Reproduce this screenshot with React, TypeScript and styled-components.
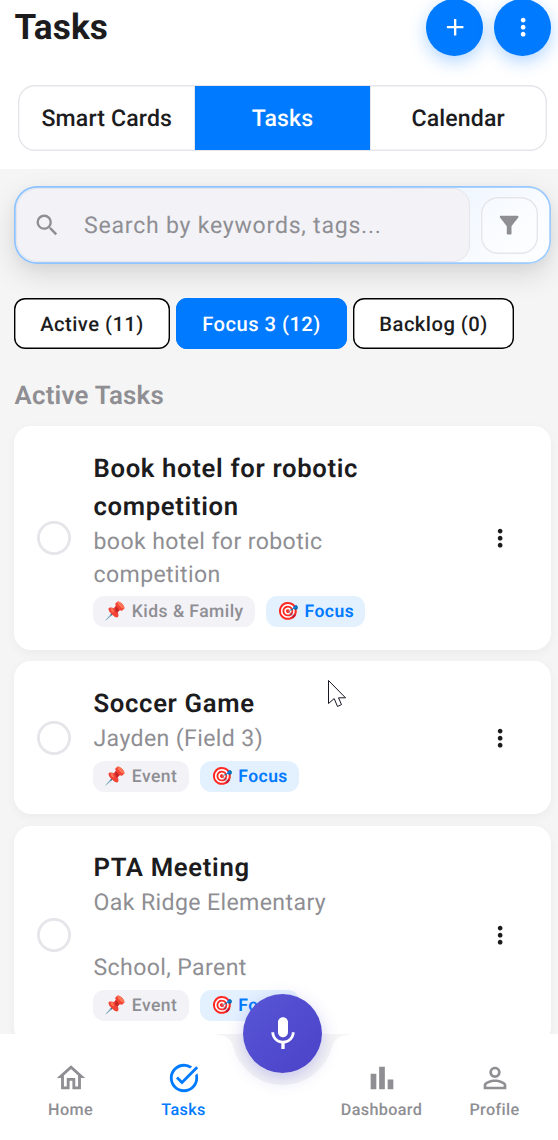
import React from 'react';
import styled, { createGlobalStyle, css } from 'styled-components';
import { MdAdd, MdFilterAlt, MdMic, MdMoreVert, MdOutlineHome, MdPersonOutline, MdSearch, MdTaskAlt } from 'react-icons/md';

const blue = '#007aff';
const ink = '#1c1c1e';
const muted = '#8e8e93';
const line = '#e5e5ea';

const Global = createGlobalStyle`
  *, *::before, *::after { box-sizing: border-box; }
  body { margin: 0; font-family: Roboto, "Noto Color Emoji", sans-serif; color: ${ink}; text-rendering: geometricPrecision; }
  button { font: inherit; color: inherit; padding: 0; margin: 0; letter-spacing: inherit; text-rendering: inherit; }
`;

const Screen = styled.div`
  position: relative;
  display: flex;
  flex-direction: column;
  width: 558px;
  height: 1140px;
  overflow: hidden;
  background: #f5f5f5;
`;

const Header = styled.header`
  flex: none;
  height: 169px;
  background: #fff;
`;

const TitleRow = styled.div`
  display: flex;
  align-items: center;
  justify-content: space-between;
  height: 54.6px;
  padding: 0 7px 0 14.5px;
`;

const Title = styled.h1`
  margin: 0;
  font-size: 35.2px;
  font-weight: 700;
  line-height: 40px;
  letter-spacing: 0.1px;
`;

const Actions = styled.div`
  display: flex;
  gap: 11.3px;
`;

const RoundButton = styled.button`
  display: grid;
  place-items: center;
  width: 56.7px;
  height: 56.7px;
  border: 0;
  border-radius: 50%;
  background: ${blue};
  color: #fff;
  box-shadow: 0 5.6px 17px rgba(0, 122, 255, 0.3);
`;

const Tabs = styled.div`
  display: flex;
  height: 66px;
  margin: 30.4px 11px 0 18px;
  padding: 1.4px;
  border-radius: 17px;
  background: #fff;
  box-shadow: inset 0 0 0 1.4px ${line};
  overflow: hidden;
`;

const Tab = styled.button<{ $active?: boolean }>`
  flex: 1;
  border: 0;
  padding-top: 1.4px;
  background: ${p => (p.$active ? blue : 'transparent')};
  color: ${p => (p.$active ? '#fff' : ink)};
  font-size: 23.1px;
  font-weight: 500;
  letter-spacing: 0.14px;
  & + & { border-left: 1px solid ${line}; }
`;

const Content = styled.main`
  flex: 1;
  min-height: 0;
  overflow: hidden;
  padding: 17px 7px 0 14px;
`;

const SearchBar = styled.div`
  display: flex;
  align-items: center;
  height: 78px;
  padding: 2px;
  border-radius: 23px;
  background: linear-gradient(135deg, #e3effe 0%, #e6f1ff 55%, #fff 100%);
  box-shadow: inset 0 0 0 1.7px rgba(0, 122, 255, 0.38), 0 11px 28px rgba(0, 0, 0, 0.12), 0 3px 11px rgba(0, 0, 0, 0.04);
`;

const SearchField = styled.div`
  display: flex;
  align-items: center;
  width: 454px;
  height: 74px;
  padding-left: 16px;
  border: 1.4px solid ${line};
  border-radius: 22px 17px 17px 22px;
  background: #f2f2f7;
  color: ${muted};
  font-size: 23.1px;
  letter-spacing: 0.75px;
  span { margin-left: 22.8px; }
`;

const FilterButton = styled.button`
  display: grid;
  place-items: center;
  width: 57px;
  height: 57px;
  margin-left: 11px;
  border: 0;
  box-shadow: inset 0 0 0 1.4px ${line};
  border-radius: 17px;
  background: rgba(255, 255, 255, 0.25);
  color: ${muted};
`;

const Filters = styled.div`
  display: flex;
  gap: 6px;
  margin-top: 34.4px;
`;

const Filter = styled.button<{ $active?: boolean; $w: number }>`
  width: ${p => p.$w}px;
  height: 51px;
  border: 0;
  box-shadow: inset 0 0 0 1.4px ${p => (p.$active ? blue : '#000')};
  border-radius: 11.3px;
  background: ${p => (p.$active ? blue : '#fff')};
  color: ${p => (p.$active ? '#fff' : ink)};
  font-size: 20.2px;
  font-weight: 500;
  line-height: 24px;
  padding-top: 0.6px;
  letter-spacing: 0.46px;
`;

const SectionTitle = styled.h2`
  margin: 29px 0 10.9px 0.5px;
  height: 37px;
  color: ${muted};
  font-size: 25.8px;
  font-weight: 600;
  line-height: 37px;
  letter-spacing: 0.24px;
`;

const Card = styled.article`
  display: flex;
  align-items: center;
  margin-bottom: 11.3px;
  padding: 22.7px;
  border-radius: 17px;
  background: #fff;
  box-shadow: 0 3px 11px rgba(0, 0, 0, 0.045);
`;

const Check = styled.span`
  flex: none;
  width: 34px;
  height: 34px;
  box-shadow: inset 0 0 0 2.8px ${line};
  border-radius: 50%;
`;

const Body = styled.div`
  flex: 1;
  margin-left: 22.8px;
`;

const TaskTitle = styled.h3`
  margin: 0;
  padding-top: 0.8px;
  font-size: 25.7px;
  font-weight: 600;
  line-height: 38.2px;
  letter-spacing: 0.66px;
  white-space: pre-line;
`;

const Note = styled.p`
  margin: 0;
  color: ${muted};
  font-size: 23.1px;
  line-height: 32.6px;
  letter-spacing: 0.38px;
  white-space: pre-line;
`;

const Tags = styled.div`
  display: flex;
  gap: 11.3px;
  margin-top: 5px;
`;

const Tag = styled.span<{ $focus?: boolean }>`
  height: 31px;
  padding: 0 11.3px;
  border-radius: 11.3px;
  background: ${p => (p.$focus ? '#e3f1ff' : '#f2f2f7')};
  color: ${p => (p.$focus ? blue : muted)};
  font-size: 17.5px;
  font-weight: ${p => (p.$focus ? 600 : 500)};
  line-height: 32px;
  letter-spacing: 0.46px;
  white-space: nowrap;
`;

const MenuButton = styled.button`
  display: grid;
  place-items: center;
  width: 56.7px;
  height: 56.7px;
  border: 0;
  background: none;
`;

const NavBar = styled.nav`
  position: relative;
  flex: none;
  height: 106px;
`;

const NavShape = styled.svg`
  position: absolute;
  inset: 0;
`;

const NavItems = styled.div`
  position: relative;
  display: flex;
  height: 100%;
  padding: 26.6px 7px 0 14px;
`;

const NavItem = styled.button<{ $active?: boolean; $afterMic?: boolean }>`
  flex: 1;
  display: flex;
  flex-direction: column;
  align-items: center;
  border: 0;
  background: none;
  color: ${p => (p.$active ? blue : muted)};
  font-size: 16.2px;
  font-weight: 500;
  line-height: 20px;
  letter-spacing: 0.36px;
  ${p => p.$afterMic && css`margin-left: 85px;`}
  svg { margin-bottom: 5px; }
`;

const MicButton = styled.button`
  position: absolute;
  left: 243px;
  top: -40px;
  display: grid;
  place-items: center;
  width: 79.3px;
  height: 79.3px;
  border: 0;
  border-radius: 50%;
  background: linear-gradient(135deg, #5856d6, #4b42c8);
  color: #fff;
  box-shadow: 0 5.6px 17px rgba(88, 86, 214, 0.3);
`;

const Pointer = styled.svg`
  position: absolute;
  left: 327px;
  top: 679px;
`;

const BarsIcon = () => (
  <svg width="34" height="34" viewBox="0 0 24 24" fill="currentColor">
    <path d="M4 9h4v11H4zM16 13h4v7h-4zM10 4h4v16h-4z" />
  </svg>
);

const tasks = [
  { title: 'Book hotel for robotic\ncompetition', note: 'book hotel for robotic\ncompetition', tag: 'Kids & Family' },
  { title: 'Soccer Game', note: 'Jayden (Field 3)', tag: 'Event' },
  { title: 'PTA Meeting', note: 'Oak Ridge Elementary\n\nSchool, Parent', tag: 'Event' },
];

export default function App() {
  return (
    <Screen>
      <Global />
      <Header>
        <TitleRow>
          <Title>Tasks</Title>
          <Actions>
            <RoundButton aria-label="Add"><MdAdd size={28.3} /></RoundButton>
            <RoundButton aria-label="More"><MdMoreVert size={28.3} /></RoundButton>
          </Actions>
        </TitleRow>
        <Tabs>
          <Tab>Smart Cards</Tab>
          <Tab $active>Tasks</Tab>
          <Tab>Calendar</Tab>
        </Tabs>
      </Header>
      <Content>
        <SearchBar>
          <SearchField>
            <MdSearch size={28.3} />
            <span>Search by keywords, tags...</span>
          </SearchField>
          <FilterButton aria-label="Filter"><MdFilterAlt size={28.3} /></FilterButton>
        </SearchBar>
        <Filters>
          <Filter $w={156}>Active (11)</Filter>
          <Filter $w={171} $active>Focus 3 (12)</Filter>
          <Filter $w={161}>Backlog (0)</Filter>
        </Filters>
        <SectionTitle>Active Tasks</SectionTitle>
        {tasks.map(task => (
          <Card key={task.title}>
            <Check />
            <Body>
              <TaskTitle>{task.title}</TaskTitle>
              <Note>{task.note}</Note>
              <Tags>
                <Tag>📌 {task.tag}</Tag>
                <Tag $focus>🎯 Focus</Tag>
              </Tags>
            </Body>
            <MenuButton aria-label="Task menu"><MdMoreVert size={28.3} /></MenuButton>
          </Card>
        ))}
      </Content>
      <NavBar>
        <NavShape width="558" height="106">
          <path fill="#fff" d="M0 0H209Q230.3 0 233.1 11.9A51 51 0 0 0 332.3 11.9Q335.1 0 356.3 0H558V106H0Z" />
        </NavShape>
        <MicButton aria-label="Voice"><MdMic size={40} /></MicButton>
        <NavItems>
          <NavItem><MdOutlineHome size={34} />Home</NavItem>
          <NavItem $active><MdTaskAlt size={34} />Tasks</NavItem>
          <NavItem $afterMic><BarsIcon />Dashboard</NavItem>
          <NavItem><MdPersonOutline size={34} />Profile</NavItem>
        </NavItems>
      </NavBar>
      <Pointer width="22" height="30" viewBox="0 0 22 30">
        <path d="M1.5 1.5V24.5L7.2 19.6L10.5 27.5L14.5 25.6L11.5 18.8H18.5Z" fill="#fff" stroke="#171725" strokeWidth="1" />
      </Pointer>
    </Screen>
  );
}
